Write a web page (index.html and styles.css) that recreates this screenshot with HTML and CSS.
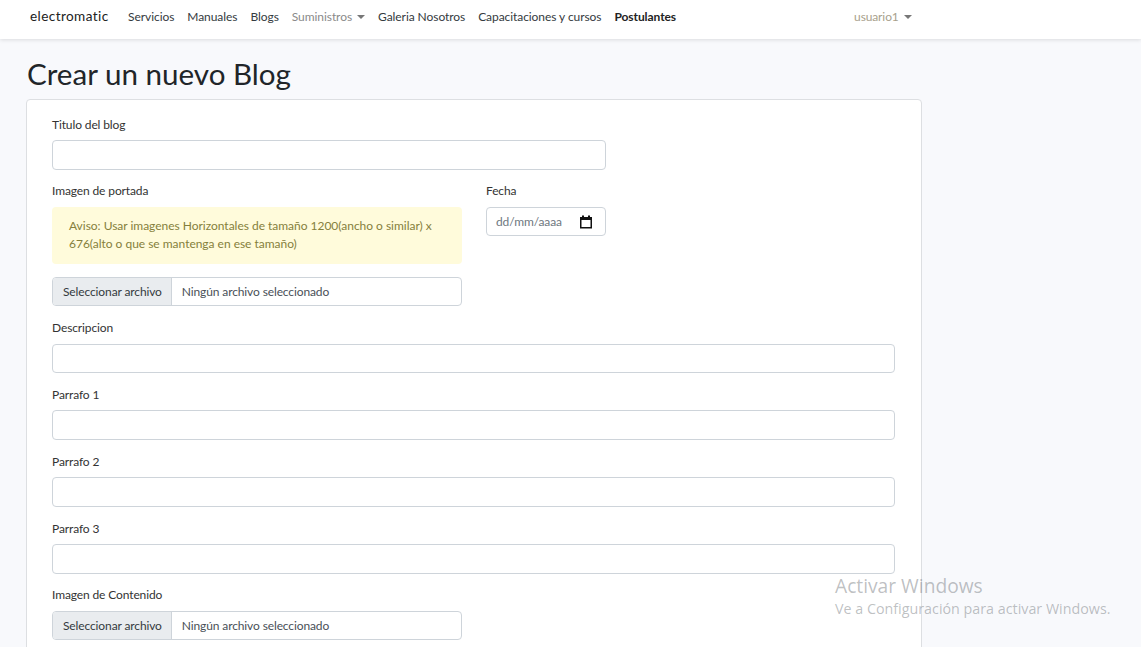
FILE: index.html
```html
<!DOCTYPE html>
<html>
  <head>
    <meta charset="utf-8">
    <link rel="stylesheet" href="styles.css">
    <title>Crear un nuevo Blog</title>
  </head>
  <body>
    <nav class="navbar">
      <a class="brand" href="#">electromatic</a>
      <ul class="nav-links">
        <li><a href="#">Servicios</a></li>
        <li><a href="#">Manuales</a></li>
        <li><a href="#">Blogs</a></li>
        <li><a class="muted caret" href="#">Suministros</a></li>
        <li><a href="#">Galeria Nosotros</a></li>
        <li><a href="#">Capacitaciones y cursos</a></li>
        <li><a class="strong" href="#">Postulantes</a></li>
      </ul>
      <a class="user caret" href="#">usuario1</a>
    </nav>

    <main class="content">
      <h1>Crear un nuevo Blog</h1>
      <form class="card">
        <div class="title-col">
          <label class="field-label first">Titulo del blog</label>
          <input class="text-input tall" type="text">

          <div class="cover-row">
            <div>
              <label class="field-label">Imagen de portada</label>
              <div class="alert">Aviso: Usar imagenes Horizontales de tamaño 1200(ancho o similar) x 676(alto o que se mantenga en ese tamaño)</div>
              <div class="file-input">
                <span class="file-btn">Seleccionar archivo</span>
                <span class="file-name">Ningún archivo seleccionado</span>
              </div>
            </div>
            <div>
              <label class="field-label">Fecha</label>
              <div class="date-input">
                <span>dd/mm/aaaa</span>
                <svg width="14" height="14" viewBox="0 0 14 14">
                  <path d="M3 0.5h2v1.5h4v-1.5h2v1.5h2v11.5h-12v-11.5h2z M2.5 5v7h9v-7z" fill="#111" fill-rule="evenodd"/>
                </svg>
              </div>
            </div>
          </div>
        </div>

        <label class="field-label">Descripcion</label>
        <input class="text-input" type="text">
        <label class="field-label low">Parrafo 1</label>
        <input class="text-input tall" type="text">
        <label class="field-label low">Parrafo 2</label>
        <input class="text-input tall" type="text">
        <label class="field-label low">Parrafo 3</label>
        <input class="text-input tall" type="text">
        <label class="field-label">Imagen de Contenido</label>
        <div class="file-input">
          <span class="file-btn">Seleccionar archivo</span>
          <span class="file-name">Ningún archivo seleccionado</span>
        </div>
      </form>
    </main>

    <div class="watermark">
      <div class="wm-title">Activar Windows</div>
      <div class="wm-sub">Ve a Configuración para activar Windows.</div>
    </div>
  </body>
</html>
```

FILE: styles.css
```css
html, body {
  margin: 0;
  height: 100%;
  overflow: hidden;
}

body {
  background-color: #f8f9fc;
  color: #212529;
  font-family: "Lato", "Open Sans", sans-serif;
  font-size: 12px;
  letter-spacing: -0.12px;
}

a {
  color: inherit;
  text-decoration: none;
}

.navbar {
  height: 39px;
  background-color: #fff;
  box-shadow: 0 1px 4px rgba(0, 0, 0, 0.12);
  display: flex;
  align-items: center;
  padding: 0 30px 7px;
  box-sizing: border-box;
  position: relative;
}

.brand {
  font-size: 13.6px;
  letter-spacing: 0.4px;
  color: #222;
  margin-right: 19.5px;
}

.nav-links {
  display: flex;
  gap: 13px;
  list-style: none;
  margin: 0;
  padding: 0;
  color: #343a40;
  letter-spacing: -0.07px;
}

.muted {
  color: #8a8a8a;
}

.strong {
  font-weight: 700;
  color: #222;
}

.caret::after {
  content: "";
  display: inline-block;
  margin-left: 5px;
  vertical-align: 2px;
  border-top: 4px solid #777;
  border-left: 4px solid transparent;
  border-right: 4px solid transparent;
}

.user {
  margin-left: 178px;
  color: #a89f8c;
}

.content {
  padding: 0 26px;
}

h1 {
  margin: 0;
  padding: 18px 0 9px 1px;
  height: 33px;
  font-size: 29.6px;
  font-weight: 400;
  letter-spacing: 0;
  line-height: 33px;
  color: #212529;
}

.card {
  width: 896px;
  box-sizing: border-box;
  padding: 0 26px 0 25px;
  background-color: #fff;
  border: 1px solid #dddfe2;
  border-radius: 4px;
  height: 700px;
}

.title-col {
  width: 554px;
}

.field-label {
  display: block;
  height: 15px;
  line-height: 15px;
  padding-top: 13px;
  margin-bottom: 9px;
  color: #333;
}

.field-label.first {
  padding-top: 17px;
  margin-bottom: 8px;
}

.field-label.low {
  padding-top: 14px;
  margin-bottom: 8px;
}

.text-input {
  display: block;
  width: 100%;
  height: 29px;
  box-sizing: border-box;
  background-color: #fff;
  border: 1px solid #ced4da;
  border-radius: 4px;
  margin: 0;
  padding: 0;
}

.text-input.tall {
  height: 30px;
}

.cover-row {
  display: grid;
  grid-template-columns: 410px 120px;
  column-gap: 24px;
  padding-bottom: 1px;
}

.alert {
  box-sizing: border-box;
  height: 57px;
  padding: 10px 17px;
  line-height: 18px;
  letter-spacing: -0.02px;
  color: #857f3c;
  background-color: #fffbdb;
  border-radius: 4px;
  margin-bottom: 13px;
}

.file-input {
  display: flex;
  width: 410px;
  height: 29px;
  box-sizing: border-box;
  background-color: #fff;
  border: 1px solid #ced4da;
  border-radius: 4px;
  overflow: hidden;
  line-height: 27px;
}

.file-btn {
  background-color: #e9ecef;
  border-right: 1px solid #ced4da;
  padding: 0 9px 0 10px;
  color: #343a40;
}

.file-name {
  padding-left: 10px;
  color: #495057;
}

.date-input {
  display: flex;
  justify-content: space-between;
  align-items: center;
  height: 29px;
  box-sizing: border-box;
  padding: 0 12px 0 9px;
  border: 1px solid #ced4da;
  border-radius: 4px;
  color: #6e7780;
}

.watermark {
  position: absolute;
  left: 835px;
  top: 573px;
  font-family: "Open Sans", sans-serif;
  letter-spacing: 0;
  color: rgba(110, 115, 120, 0.45);
}

.wm-title {
  font-size: 19.2px;
  line-height: 25px;
}

.wm-sub {
  font-size: 14.3px;
  line-height: 20px;
  margin-top: 1px;
}
```
